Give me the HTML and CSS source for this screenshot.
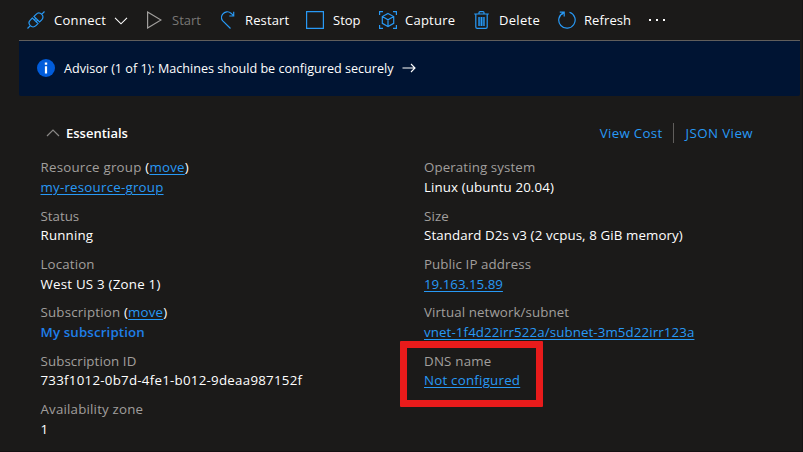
FILE: index.html
```html
<!DOCTYPE html>
<html lang="en">
<head>
<meta charset="utf-8">
<title>Virtual machine overview</title>
<link rel="stylesheet" href="styles.css">
</head>
<body>
<div class="page">
  <nav class="toolbar">
    <button class="tool">
      <svg class="icon" viewBox="0 0 18 18"><path d="M.5 17.500 3.600 14.400M14.400 3.600 17.500.5M5.400 7 3.300 9.100C1.600 10.800 1.700 13 3.300 14.700S7.200 16.400 8.900 14.700L11 12.600ZM7 5.400 9.100 3.300C10.800 1.600 13 1.700 14.700 3.300S16.400 7.200 14.700 8.900L12.600 11ZM7.300 8.900 9 7.200M9.100 10.700 10.800 9"/></svg>
      <span class="connect">Connect</span>
      <svg class="chevron" viewBox="0 0 14 8"><path d="M1 .8 7 6.800 13 .8"/></svg>
    </button>
    <button class="tool disabled">
      <svg class="icon play" viewBox="0 0 15 18"><path d="M.6 1 14 9 .6 17Z"/></svg>
      <span>Start</span>
    </button>
    <button class="tool">
      <svg class="icon restart-icon" viewBox="0 0 14 18"><path d="M9.500 17.500 1.800 9.800C.3 8.100.2 5.200 1.700 3.200 3.700.4 7.500-.1 10 2.200L12.500 4.700M12.700.7V5H8.300"/></svg>
      <span class="restart">Restart</span>
    </button>
    <button class="tool">
      <svg class="icon" viewBox="0 0 18 18"><path d="M.6.6H17.400V17.400H.6Z"/></svg>
      <span class="stop">Stop</span>
    </button>
    <button class="tool">
      <svg class="icon capture-icon" viewBox="0 0 18 18"><path d="M.6 4V.6H4M14 .6H17.400V4M17.400 14V17.400H14M4 17.400H.6V14M9 2.500 14.700 5.500V12.300L9 15.500 3.300 12.300V5.500ZM3.300 5.500 9 8.700 14.700 5.500M9 8.700V15.500"/></svg>
      <span class="capture">Capture</span>
    </button>
    <button class="tool">
      <svg class="icon trash" viewBox="0 0 15 18"><path class="bin" d="M4.500 6H10.500V15H4.500Z"/><path d="M.2 3H14.800M1.800 3V16Q1.800 17.400 3.200 17.400H11.800Q13.200 17.400 13.200 16V3M5 3V1.500Q5 .6 6 .6H9Q10 .6 10 1.500V3M5 6V15M7.500 6V15M10 6V15"/></svg>
      <span class="delete">Delete</span>
    </button>
    <button class="tool">
      <svg class="icon refresh-icon" viewBox="0 0 18 18"><path d="M11.500 1.200A8.200 8.200 0 1 1 5.200 1.700M1.800 1.200H6.200V5.500M6 1.400 3.500 3.900"/></svg>
      <span class="refresh">Refresh</span>
    </button>
    <button class="tool" aria-label="More">
      <svg class="dots" viewBox="0 0 18 4"><path d="M1 1H3V3H1ZM8 1H10V3H8ZM15 1H17V3H15Z"/></svg>
    </button>
  </nav>

  <section class="advisor">
    <svg class="info" viewBox="0 0 18 18"><circle cx="9" cy="9" r="9"/><path d="M7.900 7.200H10.100V14.500H7.900ZM7.800 3.500H10.200V5.700H7.800Z"/></svg>
    <span class="advice">Advisor (1 of 1): Machines should be configured securely</span>
    <svg class="arrow" viewBox="0 0 14 10"><path d="M.5 5H13M9 1 13 5 9 9"/></svg>
  </section>

  <header class="heading">
    <svg class="caret" viewBox="0 0 14 8"><path d="M1 7 7 1 13 7"/></svg>
    <h2>Essentials</h2>
    <div class="views"><a class="cost">View Cost</a><a class="json">JSON View</a></div>
  </header>

  <main class="essentials">
    <dl>
      <div class="field"><dt class="loose">Resource group <b>(<a>move</a>)</b></dt><dd><a class="loose">my-resource-group</a></dd></div>
      <div class="field lowered"><dt class="normal">Status</dt><dd class="wide">Running</dd></div>
      <div class="field"><dt>Location</dt><dd class="loose">West US 3 (Zone 1)</dd></div>
      <div class="field"><dt class="wide">Subscription <b>(<a>move</a>)</b></dt><dd class="subscription">My subscription</dd></div>
      <div class="field raised"><dt class="snug">Subscription ID</dt><dd class="guid">733f1012-0b7d-4fe1-b012-9deaa987152f</dd></div>
      <div class="field"><dt class="wide">Availability zone</dt><dd>1</dd></div>
    </dl>
    <dl>
      <div class="field"><dt class="snug">Operating system</dt><dd class="snug">Linux (ubuntu 20.04)</dd></div>
      <div class="field lowered"><dt>Size</dt><dd class="snug">Standard D2s v3 (2 vcpus, 8 GiB memory)</dd></div>
      <div class="field"><dt class="snug">Public IP address</dt><dd><a class="normal">19.163.15.89</a></dd></div>
      <div class="field"><dt class="snug">Virtual network/subnet</dt><dd><a class="snug">vnet-1f4d22irr522a/subnet-3m5d22irr123a</a></dd></div>
      <div class="field raised marked"><dt class="loose">DNS name</dt><dd><a class="loose">Not configured</a></dd></div>
    </dl>
  </main>
</div>
</body>
</html>
```
FILE: styles.css
```css
* { box-sizing: border-box; }
body { margin: 0; background: #1b1a19; color: #fff; font: 13px/20px "Open Sans", "Noto Sans", sans-serif; }
.page { width: 803px; height: 452px; overflow: hidden; border-right: 1px solid #151314; border-bottom: 1px solid #151013; }
.toolbar { display: grid; grid-template-columns: 120px 74px 85px 73px 95px 84px 91px 20px; height: 41px; margin: 0 2px 0 19px; padding-left: 8px; border-bottom: 1px solid #605e5c; }
.tool { display: flex; align-items: center; height: 40px; padding: 0; border: 0; background: none; color: inherit; font: inherit; white-space: nowrap; }
.icon { width: 18px; height: 18px; margin-right: 9px; fill: none; stroke: #2899f5; stroke-width: 1.2; flex: none; }
.play { width: 15px; margin-right: 10px; }
.disabled { color: #797775; }
.disabled .icon { stroke: #a19f9d; }
.restart-icon { width: 14px; margin-right: 10px; }
.capture-icon { margin-right: 8px; }
.trash { width: 15px; margin-right: 10px; }
.refresh-icon { margin-right: 8px; }
.icon .bin { fill: #174f7d; stroke: none; }
.connect { letter-spacing: .3px; }
.restart { letter-spacing: .12px; }
.capture { letter-spacing: .25px; }
.delete { letter-spacing: .3px; }
.refresh { letter-spacing: .1px; }
.chevron { width: 14px; height: 8px; margin: 2px 0 0 8px; fill: none; stroke: #fff; stroke-width: 1.1; }
.dots { width: 18px; height: 4px; margin-left: -1px; fill: #fff; }
.advisor { display: flex; align-items: center; height: 55px; margin: 0 2px 0 19px; padding-left: 18px; background: #001433; border-radius: 0 0 2px 2px; white-space: nowrap; }
.info { width: 18px; height: 18px; margin: -1px 9px 0 0; fill: #015cda; }
.info path { fill: #fff; }
.advice { font-size: 12.6px; }
.arrow { width: 14px; height: 10px; margin: -1px 0 0 8px; fill: none; stroke: #fff; stroke-width: 1.1; }
.heading { display: flex; align-items: center; height: 20px; margin: 27px 49px 0 46px; }
.caret { width: 14px; height: 8px; margin-right: 6px; fill: none; stroke: #8a8886; stroke-width: 1.2; }
h2 { margin: 0; font-size: 13px; font-weight: 600; }
.views { display: flex; margin-left: auto; font-size: 13.3px; white-space: nowrap; }
.cost { letter-spacing: .3px; }
a { color: #2899f5; }
.json { margin-left: 11px; padding-left: 11px; border-left: 1px solid #605e5c; letter-spacing: .42px; }
.essentials { display: grid; grid-template-columns: 383.5px 1fr; margin: 14px 0 0 40.5px; font-size: 13.3px; letter-spacing: .14px; }
.essentials a { text-decoration: underline; text-underline-offset: 2px; text-decoration-thickness: 1px; }
.essentials .loose { letter-spacing: .23px; }
.essentials .wide { letter-spacing: .19px; }
.essentials .snug { letter-spacing: .11px; }
.essentials .normal { letter-spacing: 0; }
dl { margin: 0; }
.field { position: relative; height: 48.4px; white-space: nowrap; }
dt { height: 20px; color: #a19f9d; }
.raised dt { height: 19px; }
.lowered dt { height: 19px; margin-top: 0; }
.lowered { padding-top: 1px; }
dt b { color: #fff; font-weight: 400; }
dd { height: 20px; margin: 0; }
.essentials .guid { letter-spacing: .26px; }
.subscription { font-weight: 600; color: #1f7fe8; }
.marked::after { content: ""; box-sizing: border-box; position: absolute; left: -24px; top: -9.6px; width: 143px; height: 66px; border: 7px solid #e81b1b; border-radius: 1px; }
```
